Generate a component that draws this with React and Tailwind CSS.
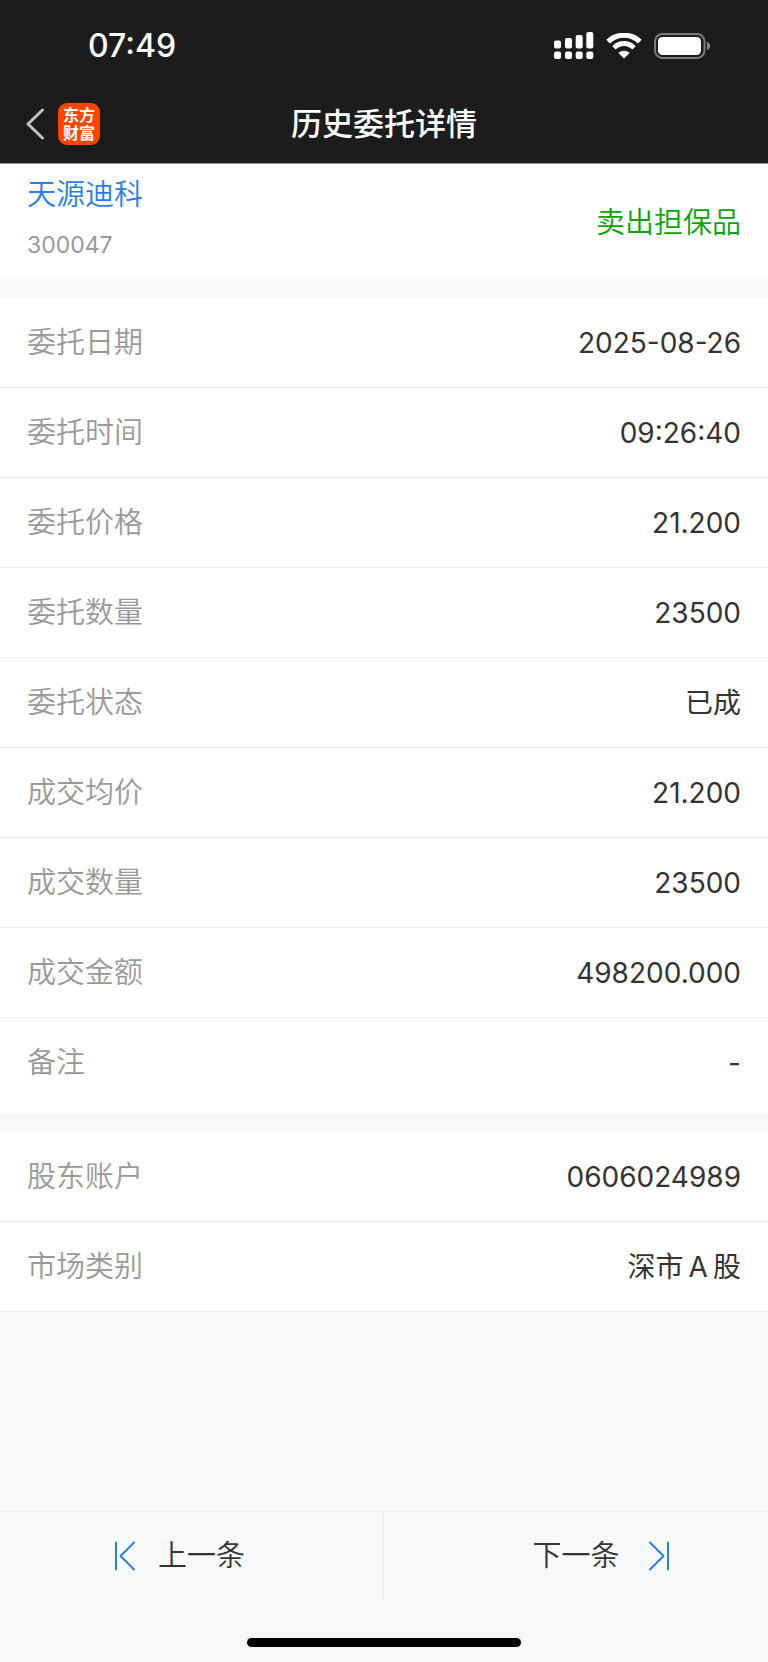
const orderRows = [
  { label: "委托日期", value: "2025-08-26" },
  { label: "委托时间", value: "09:26:40" },
  { label: "委托价格", value: "21.200" },
  { label: "委托数量", value: "23500" },
  { label: "委托状态", value: "已成" },
  { label: "成交均价", value: "21.200" },
  { label: "成交数量", value: "23500" },
  { label: "成交金额", value: "498200.000" },
  { label: "备注", value: "-" },
];

const accountRows = [
  { label: "股东账户", value: "0606024989" },
  { label: "市场类别", value: "深市\u2009A\u2009股" },
];

const SignalIcon = () => (
  <svg width="40" height="28" viewBox="0 0 40 28" fill="#fff" aria-hidden="true">
    <rect x="0" y="8.5" width="7" height="8" rx="2" />
    <rect x="11" y="6" width="7" height="10.5" rx="2" />
    <rect x="21.7" y="3" width="7" height="13.5" rx="2" />
    <rect x="32.3" y="0" width="7" height="16.5" rx="2" />
    <rect x="0" y="19.5" width="7" height="7.5" rx="2" />
    <rect x="11" y="19.5" width="7" height="7.5" rx="2" />
    <rect x="21.7" y="19.5" width="7" height="7.5" rx="2" />
    <rect x="32.3" y="19.5" width="7" height="7.5" rx="2" />
  </svg>
);

const WifiIcon = () => (
  <svg width="36" height="26" viewBox="0 0 36 26" fill="none" aria-hidden="true">
    <path d="M2.2 8.6A22.6 22.6 0 0 1 33.8 8.6" stroke="#fff" strokeWidth="5.2" />
    <path d="M8 14.8A13.8 13.8 0 0 1 28 14.8" stroke="#fff" strokeWidth="4.8" />
    <path d="M12.4 20A8.2 8.2 0 0 1 23.6 20L18 25.6Z" fill="#fff" />
  </svg>
);

const BatteryIcon = () => (
  <svg width="57" height="26" viewBox="0 0 57 26" fill="none" aria-hidden="true">
    <rect x="1" y="1" width="49.5" height="24" rx="7.5" stroke="#7b7b7b" strokeWidth="2" />
    <rect x="4" y="4" width="43" height="18" rx="4.5" fill="#fff" />
    <path d="M53 9C57 10 57 16 53 17Z" fill="#8a8a8a" />
  </svg>
);

const InfoList = ({ rows }) => (
  <dl>
    {rows.map(({ label, value }) => (
      <div
        key={label}
        className="flex h-[90px] items-center justify-between border-b border-[#eaebed] px-[27px]"
      >
        <dt className="text-[29px] font-[350] text-[#999]">{label}</dt>
        <dd className="text-[28px] text-[#333]">{value}</dd>
      </div>
    ))}
  </dl>
);

const App = () => {
  return (
    <div className="flex min-h-screen flex-col bg-[#f7f8fa] font-['Inter','Noto_Sans_CJK_SC',sans-serif] leading-10">
      {/* Header */}
      <header className="border-b border-[#999] bg-[#1c1c1c] pb-2 text-white">
        <div className="flex h-[92px] items-center justify-between pr-[57px] pl-[88px]">
          <span className="text-[32px] font-medium">07:49</span>
          <div className="flex items-center">
            <SignalIcon />
            <span className="ml-3">
              <WifiIcon />
            </span>
            <span className="ml-3">
              <BatteryIcon />
            </span>
          </div>
        </div>
        <div className="grid h-[63px] grid-cols-[1fr_auto_1fr] items-center">
          <div className="flex items-center gap-[14px] pl-[26px]">
            <button type="button" aria-label="返回">
              <svg width="18" height="32" viewBox="0 0 18 32" fill="none" className="block">
                <path
                  d="M16.5 2L2 16L16.5 30"
                  stroke="#c0c0c0"
                  strokeWidth="3"
                  strokeLinecap="round"
                  strokeLinejoin="round"
                />
              </svg>
            </button>
            <div className="flex size-[42px] flex-col items-center justify-center rounded-[9px] bg-[#ff4400] text-[16px] leading-[18px] font-bold">
              <span>东方</span>
              <span>财富</span>
            </div>
          </div>
          <h1 className="text-[31px] font-medium">历史委托详情</h1>
        </div>
      </header>

      {/* Stock */}
      <section className="flex items-center justify-between bg-white px-[27px] pt-[11px] pb-[14px]">
        <div className="flex flex-col gap-[10px]">
          <a href="#stock" className="text-[29px] font-[350] text-[#2b7de9]">
            天源迪科
          </a>
          <span className="text-[23px] text-[#999]">300047</span>
        </div>
        <span className="font-['Noto_Sans_CJK_SC',sans-serif] text-[29px] font-[350] text-[#0aa30a]">
          卖出担保品
        </span>
      </section>

      <main className="mt-[19px] flex-1">
        {/* the remark row has no divider, only the wider gap below it */}
        <div className="bg-white pb-[6px] [&_dl>div:last-child]:border-transparent">
          <InfoList rows={orderRows} />
        </div>
        <div className="mt-[18px] bg-white">
          <InfoList rows={accountRows} />
        </div>
      </main>

      {/* Prev / next */}
      <footer className="border-t border-[#eaebed]">
        <div className="grid h-[88px] grid-cols-2 text-[29px] font-[350] text-[#333]">
          <button
            type="button"
            className="flex items-center justify-center gap-[22px] border-r border-[#eaebed] pr-6"
          >
            <svg width="22" height="30" viewBox="0 0 22 30" fill="none" stroke="#2b7de9" strokeWidth="2" strokeLinecap="round" strokeLinejoin="round">
              <path d="M2 1.5V28.5M20 1.5L6.5 15L20 28.5" />
            </svg>
            上一条
          </button>
          <button type="button" className="flex items-center justify-center gap-7 pl-[50px]">
            下一条
            <svg width="22" height="30" viewBox="0 0 22 30" fill="none" stroke="#2b7de9" strokeWidth="2" strokeLinecap="round" strokeLinejoin="round">
              <path d="M20 1.5V28.5M2 1.5L15.5 15L2 28.5" />
            </svg>
          </button>
        </div>
        <div className="flex h-[62px] items-end justify-center pb-[15px]">
          <div className="h-[9px] w-[274px] rounded-full bg-black" />
        </div>
      </footer>
    </div>
  );
};

export default App;
